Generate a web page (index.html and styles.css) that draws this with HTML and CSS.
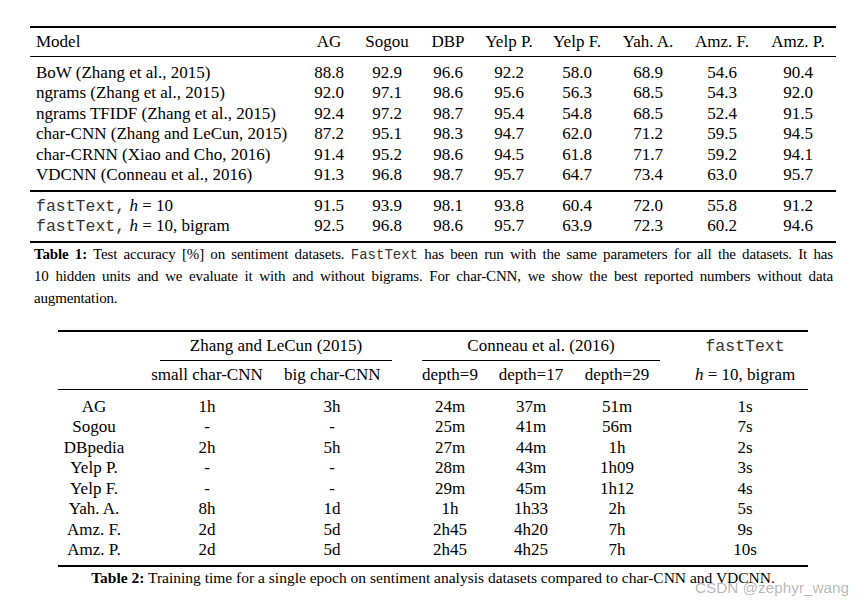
FILE: index.html
```html
<!DOCTYPE html>
<html>
<head>
<meta charset="utf-8">
<title>fastText results</title>
<link rel="stylesheet" href="styles.css">
</head>
<body>
<div class="page">
  <table class="t1">
    <colgroup>
      <col class="w-model"><col class="w50"><col class="w66"><col class="w56"><col class="w66"><col class="w70"><col class="w72"><col class="w76"><col class="w76">
    </colgroup>
    <thead>
      <tr><th class="lbl">Model</th><th>AG</th><th>Sogou</th><th>DBP</th><th>Yelp P.</th><th>Yelp F.</th><th>Yah. A.</th><th>Amz. F.</th><th>Amz. P.</th></tr>
    </thead>
    <tbody class="grp-a">
      <tr><td class="lbl">BoW (Zhang et al., 2015)</td><td>88.8</td><td>92.9</td><td>96.6</td><td>92.2</td><td>58.0</td><td>68.9</td><td>54.6</td><td>90.4</td></tr>
      <tr><td class="lbl">ngrams (Zhang et al., 2015)</td><td>92.0</td><td>97.1</td><td>98.6</td><td>95.6</td><td>56.3</td><td>68.5</td><td>54.3</td><td>92.0</td></tr>
      <tr><td class="lbl">ngrams TFIDF (Zhang et al., 2015)</td><td>92.4</td><td>97.2</td><td>98.7</td><td>95.4</td><td>54.8</td><td>68.5</td><td>52.4</td><td>91.5</td></tr>
      <tr><td class="lbl">char-CNN (Zhang and LeCun, 2015)</td><td>87.2</td><td>95.1</td><td>98.3</td><td>94.7</td><td>62.0</td><td>71.2</td><td>59.5</td><td>94.5</td></tr>
      <tr><td class="lbl">char-CRNN (Xiao and Cho, 2016)</td><td>91.4</td><td>95.2</td><td>98.6</td><td>94.5</td><td>61.8</td><td>71.7</td><td>59.2</td><td>94.1</td></tr>
      <tr><td class="lbl">VDCNN (Conneau et al., 2016)</td><td>91.3</td><td>96.8</td><td>98.7</td><td>95.7</td><td>64.7</td><td>73.4</td><td>63.0</td><td>95.7</td></tr>
    </tbody>
    <tbody class="grp-b">
      <tr><td class="lbl"><span class="mono">fastText,</span> <i>h</i> = 10</td><td>91.5</td><td>93.9</td><td>98.1</td><td>93.8</td><td>60.4</td><td>72.0</td><td>55.8</td><td>91.2</td></tr>
      <tr><td class="lbl"><span class="mono">fastText,</span> <i>h</i> = 10, bigram</td><td>92.5</td><td>96.8</td><td>98.6</td><td>95.7</td><td>63.9</td><td>72.3</td><td>60.2</td><td>94.6</td></tr>
    </tbody>
  </table>

  <div class="cap1">
    <span class="jline"><b>Table 1:</b> Test accuracy [%] on sentiment datasets. <span class="mono-s">FastText</span> has been run with the same parameters for all the datasets. It has</span>
    <span class="jline">10 hidden units and we evaluate it with and without bigrams. For char-CNN, we show the best reported numbers without data</span>
    <span class="lline">augmentation.</span>
  </div>

  <table class="t2">
    <colgroup>
      <col class="v0"><col class="v1"><col class="v2"><col class="vs1"><col class="v3"><col class="v4"><col class="v5"><col class="vs2"><col class="v6">
    </colgroup>
    <thead>
      <tr class="r-group">
        <th class="plain"></th>
        <th colspan="3"><div class="cmid cmid-z">Zhang and LeCun (2015)</div></th>
        <th colspan="3"><div class="cmid cmid-c">Conneau et al. (2016)</div></th>
        <th class="plain"></th>
        <th class="plain"><span class="mono">fastText</span></th>
      </tr>
      <tr class="r-sub">
        <th></th><th>small char-CNN</th><th>big char-CNN</th><th></th><th>depth=9</th><th>depth=17</th><th>depth=29</th><th></th><th><i>h</i> = 10, bigram</th>
      </tr>
    </thead>
    <tbody>
      <tr><td>AG</td><td>1h</td><td>3h</td><td></td><td>24m</td><td>37m</td><td>51m</td><td></td><td>1s</td></tr>
      <tr><td>Sogou</td><td>-</td><td>-</td><td></td><td>25m</td><td>41m</td><td>56m</td><td></td><td>7s</td></tr>
      <tr><td>DBpedia</td><td>2h</td><td>5h</td><td></td><td>27m</td><td>44m</td><td>1h</td><td></td><td>2s</td></tr>
      <tr><td>Yelp P.</td><td>-</td><td>-</td><td></td><td>28m</td><td>43m</td><td>1h09</td><td></td><td>3s</td></tr>
      <tr><td>Yelp F.</td><td>-</td><td>-</td><td></td><td>29m</td><td>45m</td><td>1h12</td><td></td><td>4s</td></tr>
      <tr><td>Yah. A.</td><td>8h</td><td>1d</td><td></td><td>1h</td><td>1h33</td><td>2h</td><td></td><td>5s</td></tr>
      <tr><td>Amz. F.</td><td>2d</td><td>5d</td><td></td><td>2h45</td><td>4h20</td><td>7h</td><td></td><td>9s</td></tr>
      <tr><td>Amz. P.</td><td>2d</td><td>5d</td><td></td><td>2h45</td><td>4h25</td><td>7h</td><td></td><td>10s</td></tr>
    </tbody>
  </table>

  <p class="cap2"><b>Table 2:</b> Training time for a single epoch on sentiment analysis datasets compared to char-CNN and VDCNN.</p>

  <div class="watermark">CSDN @zephyr_wang</div>
</div>
</body>
</html>
```

FILE: styles.css
```css
html, body {
  margin: 0;
  padding: 0;
  background: #ffffff;
}

body {
  font-family: "Liberation Serif", "Times New Roman", serif;
  color: #000;
}

.page {
  position: relative;
  width: 865px;
  height: 606px;
  padding-top: 26px;
  box-sizing: border-box;
  overflow: hidden;
}

table {
  border-collapse: separate;
  border-spacing: 0;
  table-layout: fixed;
  font-size: 17px;
}

th, td {
  padding: 0;
  font-weight: normal;
  text-align: center;
  white-space: nowrap;
}

.mono {
  font-family: "Liberation Mono", "Courier New", monospace;
  font-size: 16.5px;
  line-height: 12px;
  color: #333;
}

/* ---------- Table 1 ---------- */
.t1 {
  margin-left: 30px;
  width: 806px;
  border-top: 2px solid #000;
}

.w-model { width: 274px; }
.w50 { width: 50px; }
.w56 { width: 56px; }
.w66 { width: 66px; }
.w70 { width: 70px; }
.w72 { width: 72px; }
.w76 { width: 76px; }

.t1 .lbl {
  text-align: left;
  padding-left: 6px;
}

.t1 thead th {
  height: 28px;
  line-height: 28px;
  border-bottom: 1px solid #000;
}

.t1 tbody td {
  height: 20.5px;
  line-height: 20.5px;
}

.t1 .grp-a tr:first-child td { padding-top: 5.5px; }
.t1 .grp-a tr:last-child td {
  padding-bottom: 4.5px;
  border-bottom: 2px solid #000;
}

.t1 .grp-b tr:first-child td { padding-top: 3.5px; }
.t1 .grp-b tr:last-child td {
  padding-bottom: 4.5px;
  border-bottom: 2px solid #000;
}

/* ---------- Caption 1 ---------- */
.cap1 {
  margin: 0 0 0 34px;
  width: 799px;
  font-size: 15px;
  line-height: 22px;
  letter-spacing: -0.15px;
}

.jline {
  display: block;
  white-space: nowrap;
  text-align: justify;
  text-align-last: justify;
}

.lline {
  display: block;
}

.mono-s {
  font-family: "Liberation Mono", "Courier New", monospace;
  font-size: 14px;
  line-height: 12px;
  letter-spacing: 0;
  color: #333;
}

/* ---------- Table 2 ---------- */
.t2 {
  margin-top: 20.5px;
  margin-left: 58px;
  width: 750px;
  border-top: 2px solid #000;
}

.v0 { width: 72px; }
.v1 { width: 154px; }
.v2 { width: 96px; }
.vs1 { width: 32px; }
.v3 { width: 76px; }
.v4 { width: 86px; }
.v5 { width: 86px; }
.vs2 { width: 22px; }
.v6 { width: 126px; }

.t2 .r-group th {
  vertical-align: top;
}

.t2 .r-group th.plain {
  height: 28px;
  line-height: 28px;
}

.cmid {
  height: 28px;
  line-height: 28px;
  border-bottom: 1px solid #000;
}

.cmid-z { margin: 0 20px 0 30px; }
.cmid-c { margin: 0 0 0 10px; }

.t2 .r-sub th {
  height: 28px;
  line-height: 28px;
  border-bottom: 1px solid #000;
}

.t2 tbody td {
  height: 20.5px;
  line-height: 20.5px;
}

.t2 tbody tr:first-child td { padding-top: 7px; }
.t2 tbody tr:last-child td {
  padding-bottom: 4.5px;
  border-bottom: 2px solid #000;
}

/* ---------- Caption 2 ---------- */
.cap2 {
  margin: 1px 0 0 58px;
  width: 750px;
  font-size: 15.5px;
  line-height: 20px;
  text-align: center;
}

/* ---------- Watermark ---------- */
.watermark {
  position: absolute;
  left: 695px;
  top: 578px;
  font-family: "Liberation Sans", Arial, sans-serif;
  font-size: 15.3px;
  line-height: 20px;
  color: rgba(0, 0, 0, 0.3);
  white-space: nowrap;
}
```
